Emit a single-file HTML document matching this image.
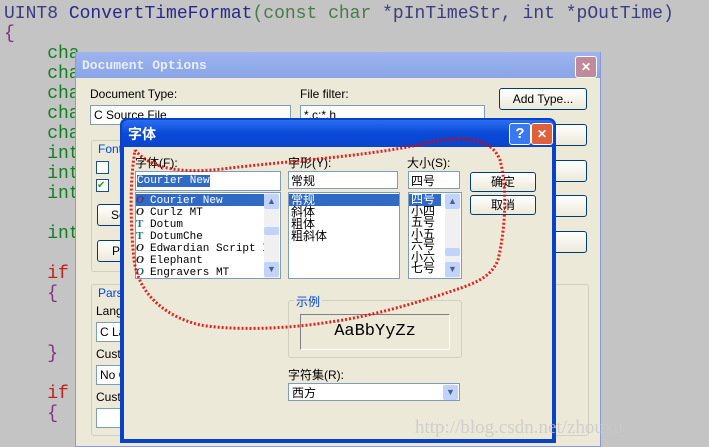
<!DOCTYPE html><html><head><meta charset="utf-8"><style>
body{margin:0;width:709px;height:447px;overflow:hidden;background:#c4c4c4;position:relative;font-family:"Liberation Sans","Noto Sans CJK SC",sans-serif;font-size:12px}
.a{position:absolute}
.code{font-family:"Liberation Mono",monospace;font-size:18px;line-height:20px;white-space:pre}
.box{position:absolute;background:#fff;border:1px solid #7f9db9}
.btn{position:absolute;height:20px;border:1px solid #003c74;border-radius:3px;background:linear-gradient(#fff,#ece9d8);text-align:center;font-size:12px;line-height:20px}
.sb{position:absolute;width:15px;background:#f0f0f0}
.arr{position:absolute;width:15px;height:15px;background:#c1d3fb;border-radius:2px;color:#4d6185;font-size:9px;text-align:center;line-height:15px}
.li{height:12px;line-height:12px;font-family:"Liberation Mono","Noto Sans CJK SC",monospace;font-size:11px;white-space:nowrap}
.ic{display:inline-block;width:14px;font-style:italic;font-weight:bold;color:#603080;font-family:"Liberation Serif",serif}
</style></head><body>
<div class="a code" style="left:4px;top:4px"><span style="color:#3c3c80">UINT8</span> <span style="color:#28288a">ConvertTimeFormat</span><span style="color:#4a7a4a">(const char</span> <span style="color:#3c3c80">*pInTimeStr, int *pOutTime)</span>
<span style="color:#803080">{</span>
<span style="color:#108020">    cha
    cha
    cha
    cha
    cha
    int
    int
    int

    int</span>

<span style="color:#c02020">    if</span>
<span style="color:#803080">    {</span>


<span style="color:#803080">    }</span>

<span style="color:#c02020">    if</span>
<span style="color:#803080">    {</span></div>
<!-- Document Options -->
<div class="a" style="left:75px;top:52px;width:526px;height:395px;background:#ece9d8;border:1px solid #8a9ad8;border-top:none;box-sizing:border-box">
<div class="a" style="left:0;top:0;width:524px;height:26px;background:linear-gradient(#9db4ef,#8aa4e6);"></div>
<div class="a" style="left:6px;top:6px;font-family:'Liberation Mono',monospace;font-weight:bold;color:#e8eeff;font-size:13px">Document Options</div>
<div class="a" style="left:499px;top:4px;width:20px;height:20px;background:#c08a9a;border:1px solid #fff;border-radius:3px;color:#fff;text-align:center;line-height:20px;font-weight:bold">✕</div>
<div class="a" style="left:14px;top:35px">Document Type:</div>
<div class="box" style="left:14px;top:53px;width:196px;height:18px;line-height:18px;padding-left:3px">C Source File</div>
<div class="a" style="left:224px;top:35px">File filter:</div>
<div class="box" style="left:224px;top:53px;width:180px;height:18px;line-height:18px;padding-left:3px">*.c;*.h</div>
<div class="btn" style="left:423px;top:36px;width:86px">Add Type...</div>
<div class="btn" style="left:423px;top:72px;width:86px">Type</div>
<div class="btn" style="left:423px;top:108px;width:86px"></div>
<div class="btn" style="left:423px;top:143px;width:86px">nt...</div>
<div class="btn" style="left:423px;top:179px;width:86px"></div>
<div class="a" style="left:15px;top:88px;width:40px;height:130px;border:1px solid #d0d0bf;border-radius:3px"></div>
<div class="a" style="left:22px;top:90px;color:#0046d5">Font</div>
<div class="a" style="left:20px;top:109px;width:11px;height:11px;border:1px solid #1c5180;background:#fff"></div>
<div class="a" style="left:20px;top:127px;width:11px;height:11px;border:1px solid #1c5180;background:#fff;color:#21a121;font-size:10px;line-height:11px">✔</div>
<div class="btn" style="left:21px;top:152px;width:40px">Sc</div>
<div class="btn" style="left:21px;top:188px;width:40px">Pr</div>
<div class="a" style="left:15px;top:232px;width:496px;height:150px;border:1px solid #d0d0bf;border-radius:3px"></div>
<div class="a" style="left:22px;top:234px;color:#0046d5">Pars</div>
<div class="a" style="left:20px;top:252px">Lang</div>
<div class="box" style="left:20px;top:270px;width:40px;height:18px;line-height:18px;padding-left:3px">C La</div>
<div class="a" style="left:20px;top:295px">Custo</div>
<div class="box" style="left:20px;top:313px;width:40px;height:18px;line-height:18px;padding-left:3px">No C</div>
<div class="a" style="left:20px;top:338px">Custo</div>
<div class="box" style="left:20px;top:356px;width:40px;height:18px"></div>
</div>
<!-- Font dialog -->
<div class="a" style="left:120px;top:118px;width:436px;height:325px;background:#0842c8;border-radius:7px 7px 0 0"></div>
<div class="a" style="left:124px;top:147px;width:428px;height:292px;background:#ece9d8"></div>
<div class="a" style="left:122px;top:120px;width:432px;height:27px;background:linear-gradient(#2a6df0,#0a4ad8 50%,#0a44cc);border-radius:6px 6px 0 0"></div>
<div class="a" style="left:128px;top:124px;color:#fff;font-weight:bold;font-size:14px">字体</div>
<div class="a" style="left:509px;top:123px;width:20px;height:20px;background:#3a78f0;border:1px solid #fff;border-radius:3px;color:#fff;text-align:center;line-height:20px;font-weight:bold;font-size:15px">?</div>
<div class="a" style="left:531px;top:123px;width:20px;height:20px;background:#e0603c;border:1px solid #fff;border-radius:3px;color:#fff;text-align:center;line-height:20px;font-weight:bold">✕</div>
<div class="a" style="left:135px;top:154px">字体(F):</div>
<div class="a" style="left:288px;top:154px">字形(Y):</div>
<div class="a" style="left:407px;top:154px">大小(S):</div>
<div class="box" style="left:135px;top:171px;width:144px;height:18px"><span class="li" style="position:absolute;left:1px;top:3px;background:#316ac5;color:#fff">Courier New</span></div>
<div class="box" style="left:288px;top:171px;width:110px;height:18px;line-height:18px;padding-left:2px;box-sizing:border-box">常规</div>
<div class="box" style="left:408px;top:171px;width:52px;height:18px;line-height:18px;padding-left:2px;box-sizing:border-box">四号</div>
<div class="box" style="left:135px;top:192px;width:144px;height:85px;overflow:hidden">
<div class="li" style="background:#316ac5;color:#fff;width:128px;margin-top:1px"><span class="ic">O</span>Courier New</div>
<div class="li"><span class="ic" style="color:#222">O</span>Curlz MT</div>
<div class="li"><span class="ic" style="color:#1a7a7a;font-style:normal">T</span>Dotum</div>
<div class="li"><span class="ic" style="color:#1a7a7a;font-style:normal">T</span>DotumChe</div>
<div class="li"><span class="ic" style="color:#222">O</span>Edwardian Script I</div>
<div class="li"><span class="ic" style="color:#222">O</span>Elephant</div>
<div class="li"><span class="ic" style="color:#1a6a6a">O</span>Engravers MT</div>
<div class="sb" style="left:128px;top:0;height:85px"><div class="arr" style="top:1px">▲</div><div class="arr" style="top:34px;height:8px"></div><div class="arr" style="top:69px">▼</div></div>
</div>
<div class="box" style="left:288px;top:192px;width:110px;height:85px;font-size:12px;line-height:12px">
<div style="background:#316ac5;color:#fff;padding-left:2px;margin-top:1px">常规</div><div style="padding-left:2px">斜体</div><div style="padding-left:2px">粗体</div><div style="padding-left:2px">粗斜体</div></div>
<div class="box" style="left:408px;top:192px;width:52px;height:85px;font-size:12px;line-height:11.5px;overflow:hidden">
<div style="background:#316ac5;color:#fff;width:30px;padding-left:2px;margin-top:1px">四号</div><div style="padding-left:2px">小四</div><div style="padding-left:2px">五号</div><div style="padding-left:2px">小五</div><div style="padding-left:2px">六号</div><div style="padding-left:2px">小六</div><div style="padding-left:2px">七号</div>
<div class="sb" style="left:36px;top:0;height:85px"><div class="arr" style="top:1px">▲</div><div class="arr" style="top:55px;height:8px"></div><div class="arr" style="top:69px">▼</div></div>
</div>
<div class="btn" style="left:470px;top:172px;width:64px;height:18px;line-height:18px">确定</div>
<div class="btn" style="left:470px;top:195px;width:64px;height:18px;line-height:18px">取消</div>
<div class="a" style="left:288px;top:300px;width:172px;height:56px;border:1px solid #d0d0bf;border-radius:3px"></div>
<div class="a" style="left:294px;top:293px;color:#0046d5;background:#ece9d8;padding:0 2px">示例</div>
<div class="a" style="left:300px;top:314px;width:148px;height:34px;border:1px solid;border-color:#808080 #fff #fff #808080;font-family:'Liberation Mono',monospace;font-size:17px;line-height:34px;text-align:center">AaBbYyZz</div>
<div class="a" style="left:288px;top:366px">字符集(R):</div>
<div class="box" style="left:288px;top:383px;width:172px;height:18px;line-height:18px;padding-left:3px;box-sizing:border-box">西方<div class="arr" style="right:1px;top:1px;left:auto">▼</div></div>
<div class="a" style="left:415px;top:417px;font-family:'Liberation Serif',serif;font-size:19px;color:rgba(200,200,200,.8)">http://blog.csdn.net/zhouxu</div>
<svg class="a" style="left:0;top:0" width="709" height="447"><path d="M135 150 C150 168 180 175 230 168 C300 160 380 155 430 142 C470 135 492 140 500 160 C508 190 505 230 498 260 C490 280 470 285 440 295 C400 308 360 318 330 322 C280 330 230 330 200 325 C160 315 138 290 134 260 C130 220 130 180 135 150" fill="none" stroke="#e00000" stroke-width="3" stroke-dasharray="2 2" opacity=".85"/></svg>
</body></html>
